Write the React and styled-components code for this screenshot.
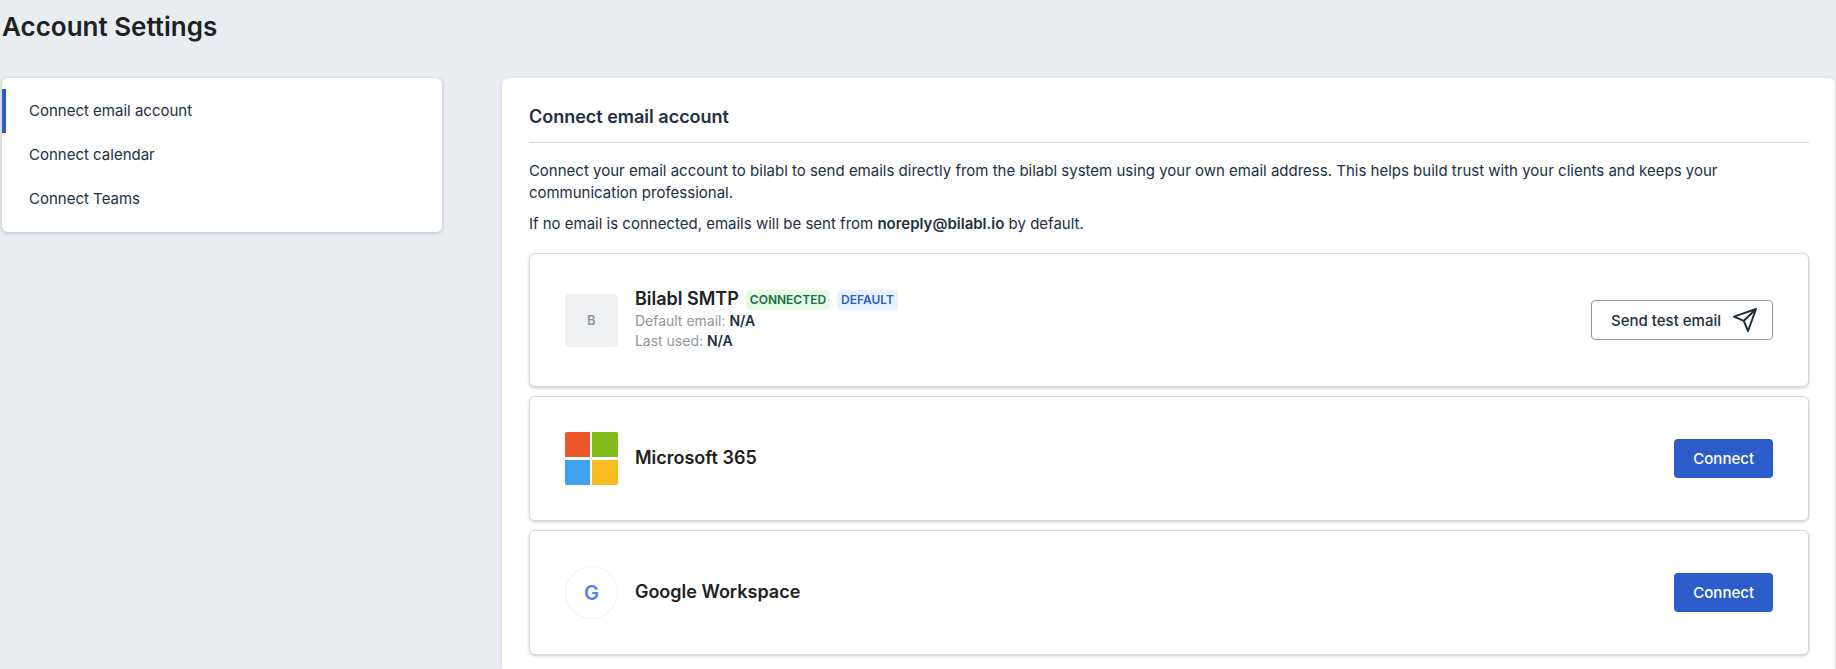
import React from "react"
import styled, { createGlobalStyle, css } from "styled-components"

const navItems = [
  { id: "email", label: "Connect email account" },
  { id: "calendar", label: "Connect calendar" },
  { id: "teams", label: "Connect Teams" },
]

const SendIcon = () => (
  <svg width="26" height="26" viewBox="0 0 26 26" fill="none" aria-hidden="true">
    <path
      d="M24 2 L2 9.6 L11.8 13.8 L16 24 Z M24 2 L11.8 13.8"
      stroke="currentColor"
      strokeWidth="2"
      strokeLinejoin="round"
      strokeLinecap="round"
    />
  </svg>
)

const MicrosoftLogo = () => (
  <MicrosoftMark viewBox="0 0 53 53" aria-hidden="true">
    <path fill="#eb592b" d="M2 0H25V25H0V2Q0 0 2 0Z" />
    <path fill="#82ba17" d="M27 0H51Q53 0 53 2V25H27Z" />
    <path fill="#3fa2ee" d="M0 28H25V53H2Q0 53 0 51Z" />
    <path fill="#f9bb22" d="M27 28H53V51Q53 53 51 53H27Z" />
  </MicrosoftMark>
)

const App = () => (
  <>
    <GlobalStyle />
    <Page>
      <PageTitle>Account Settings</PageTitle>
      <Columns>
        <Sidebar aria-label="Account settings">
          {navItems.map(item => (
            <NavLink
              key={item.id}
              href={`#${item.id}`}
              $active={item.id === "email"}
            >
              {item.label}
            </NavLink>
          ))}
        </Sidebar>

        <Panel>
          <PanelTitle>Connect email account</PanelTitle>
          <Text>
            Connect your email account to bilabl to send emails directly from
            the bilabl system using your own email address. This helps build
            trust with your clients and keeps your communication professional.
          </Text>
          <Text>
            If no email is connected, emails will be sent from{" "}
            <strong>noreply@bilabl.io</strong> by default.
          </Text>

          <Providers>
            <Card>
              <Letter>B</Letter>
              <Info>
                <NameRow>
                  <Name>Bilabl SMTP</Name>
                  <Badge $color="#1d6b45" $background="#e3fce3">
                    CONNECTED
                  </Badge>
                  <Badge $color="#2c5cc9" $background="#e6f1ff">
                    DEFAULT
                  </Badge>
                </NameRow>
                <Meta>
                  Default email: <strong>N/A</strong>
                </Meta>
                <Meta>
                  Last used: <strong>N/A</strong>
                </Meta>
              </Info>
              <OutlineButton type="button">
                Send test email
                <SendIcon />
              </OutlineButton>
            </Card>

            <Card>
              <MicrosoftLogo />
              <Info>
                <Name>Microsoft 365</Name>
              </Info>
              <PrimaryButton type="button">Connect</PrimaryButton>
            </Card>

            <Card>
              <Letter $round>G</Letter>
              <Info>
                <Name>Google Workspace</Name>
              </Info>
              <PrimaryButton type="button">Connect</PrimaryButton>
            </Card>
          </Providers>
        </Panel>
      </Columns>
    </Page>
  </>
)

const GlobalStyle = createGlobalStyle`
  * {
    box-sizing: border-box;
  }
  body {
    margin: 0;
    background: #e9edf2;
    color: #212f3f;
    font-family: Inter, "Liberation Sans", sans-serif;
    font-size: 15px;
    line-height: 22px;
  }
  #root {
    overflow: hidden;
  }
  strong {
    font-weight: 600;
  }
`

const Page = styled.div`
  display: flex;
  flex-direction: column;
  min-height: 100vh;
  padding: 9px 1px 0 2px;
`

const PageTitle = styled.h1`
  margin: 0 0 33px;
  color: #212121;
  font-size: 26px;
  font-weight: 600;
  line-height: 36px;
`

const Columns = styled.div`
  display: flex;
  flex: 1;
  align-items: flex-start;
  gap: 60px;
`

const Sidebar = styled.nav`
  flex: 0 0 24%;
  padding: 11px 0;
  border-radius: 6px;
  background: #fff;
  box-shadow: 0 1px 4px rgba(33, 47, 63, 0.25);
`

const NavLink = styled.a`
  display: block;
  padding: 11px 23px;
  border-left: 4px solid ${props => (props.$active ? "#2c5cc9" : "transparent")};
  color: inherit;
  text-decoration: none;
`

const Panel = styled.main`
  flex: 1;
  align-self: stretch;
  min-width: 0;
  padding: 28px 26px 12px 27px;
  border-radius: 6px 6px 0 0;
  background: #fff;
  box-shadow: 0 1px 4px rgba(33, 47, 63, 0.15);
`

const PanelTitle = styled.h2`
  margin: 0 0 17px;
  padding-bottom: 14px;
  border-bottom: 1px solid #d5d8da;
  font-size: 18px;
  font-weight: 600;
  line-height: 22px;
`

const Text = styled.p`
  margin: 0 0 9px;
`

const Providers = styled.div`
  display: flex;
  flex-direction: column;
  gap: 9px;
  margin-top: 18px;
`

const Card = styled.section`
  display: flex;
  align-items: center;
  gap: 17px;
  padding: 35px;
  border: 1px solid #d5d8da;
  border-radius: 6px;
  background: #fff;
  box-shadow: 0 1px 3px rgba(33, 47, 63, 0.25);
`

const Letter = styled.div`
  display: flex;
  flex: none;
  align-items: center;
  justify-content: center;
  width: 53px;
  height: 53px;
  border-radius: 4px;
  background: #eff0f2;
  color: #8f979e;
  font-size: 13px;
  font-weight: 600;
  ${props =>
    props.$round &&
    css`
      border: 1px solid #eff0f2;
      border-radius: 50%;
      background: #fff;
      color: #5683f0;
      font-size: 20px;
    `}
`

const MicrosoftMark = styled.svg`
  flex: none;
  width: 53px;
  height: 53px;
`

const Info = styled.div`
  flex: 1;
  min-width: 0;
`

const NameRow = styled.div`
  display: flex;
  align-items: center;
  gap: 7px;
`

const Name = styled.h3`
  margin: 0 0 2px;
  color: #212121;
  font-size: 18px;
  font-weight: 600;
  line-height: 20px;
`

const Badge = styled.span`
  padding: 0 4px;
  border-radius: 4px;
  background: ${props => props.$background};
  color: ${props => props.$color};
  font-size: 12px;
  font-weight: 600;
  line-height: 20px;
`

const Meta = styled.div`
  color: #8f979e;
  font-size: 14px;
  line-height: 20px;
  strong {
    color: #212f3f;
  }
`

const Button = styled.button`
  display: flex;
  flex: none;
  align-items: center;
  height: 39px;
  padding: 0 19px;
  border: 0;
  border-radius: 4px;
  font-family: inherit;
  font-size: 15px;
  font-weight: 500;
  cursor: pointer;
`

const PrimaryButton = styled(Button)`
  background: #2c5cc9;
  color: #fff;
`

const OutlineButton = styled(Button)`
  gap: 11px;
  height: 40px;
  padding: 0 14px 0 19px;
  border: 1px solid #8f979e;
  background: #fff;
  color: #212f3f;
`

export default App
